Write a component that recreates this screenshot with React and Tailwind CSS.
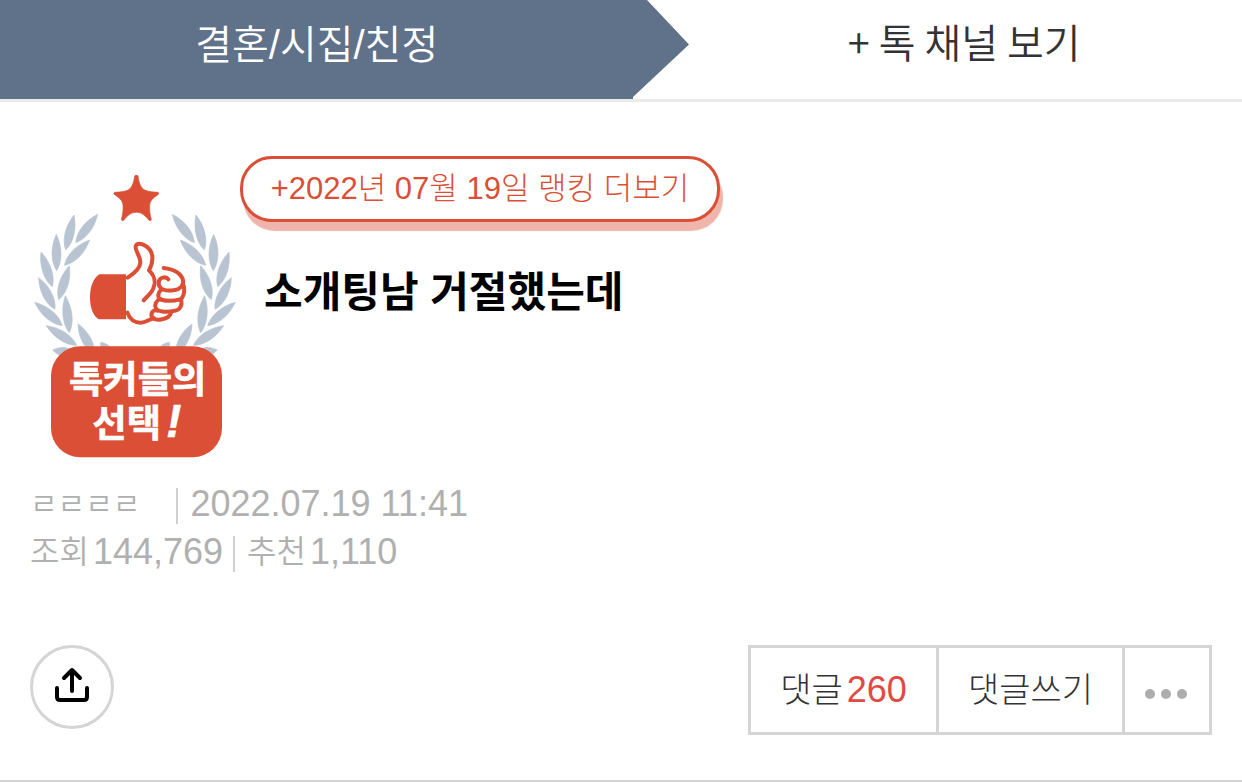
import React from "react";

const LEAVES = [
  [227, 278, 293, 193],
  [197, 300, 222, 195],
  [193, 346, 269, 270],
  [170, 362, 169, 253],
  [157, 410, 123, 306],
  [176, 449, 208, 347],
  [165, 478, 116, 383],
  [187, 527, 104, 457],
  [208, 548, 196, 437],
  [230, 586, 139, 527],
  [282, 612, 234, 522],
  [225, 612, 158, 600],
  [335, 620, 302, 577],
];

function leafPath([bx, by, tx, ty]) {
  const dx = tx - bx;
  const dy = ty - by;
  const len = Math.hypot(dx, dy);
  const nx = (-dy / len) * 18;
  const ny = (dx / len) * 18;
  const at = (t, side) => `${bx + dx * t + nx * side} ${by + dy * t + ny * side}`;
  return `M${bx} ${by} C${at(0.25, 1)} ${at(0.65, 1)} ${tx} ${ty} C${at(0.65, -1)} ${at(0.25, -1)} ${bx} ${by}Z`;
}

function Laurel() {
  return LEAVES.map((leaf) => <path key={leaf.join()} d={leafPath(leaf)} />);
}

function Emblem() {
  return (
    <svg viewBox="90 75 630 855" className="mt-[19px] w-[210px] shrink-0" role="img" aria-label="톡커들의 선택!">
      <g fill="#b8c4d1" stroke="#b8c4d1" strokeWidth="2" strokeLinejoin="round">
        <Laurel />
        <g transform="translate(810 0) scale(-1 1)">
          <Laurel />
        </g>
      </g>
      <path
        fill="#da4f35"
        stroke="#da4f35"
        strokeWidth="2"
        d="M404 78Q409 72 414 78C417 100 423 116 436 121C448 126 460 126 474 127Q479 130 474 134C460 143 450 152 449 165C448 181 450 195 454 208Q453 214 447 211C436 197 425 187 409 187C393 187 382 197 371 211Q365 214 364 208C368 195 370 181 369 165C368 152 358 143 344 134Q339 130 344 127C358 126 370 126 382 121C395 116 401 100 404 78Z"
      />
      <g transform="translate(240 240)">
        <path fill="#da4f35" d="M138 133H58C40 146 30 168 30 202C30 235 40 258 56 268H138Z" />
        <g fill="none" stroke="#da4f35" strokeWidth="12" strokeLinecap="round" strokeLinejoin="round">
          <path d="M143 143C157 134 180 118 181 98C182 78 164 62 167 49C170 38 184 40 196 47C222 62 222 92 207 121C222 135 228 155 221 172C216 190 202 198 191 211" />
          <path d="M142 248C150 270 165 278 182 278C198 278 206 268 222 265" />
          <path d="M251 114C275 117 302 126 309 150C312 166 300 178 285 180C262 184 236 182 236 158C237 141 258 138 265 148" />
          <path d="M309 162C317 180 311 204 300 208C280 214 250 214 240 207C232 200 234 188 243 180" />
          <path d="M303 208C308 225 300 240 285 242C262 248 235 246 228 236C222 225 228 212 240 207" />
          <path d="M274 245C271 262 258 267 240 269C222 271 212 262 215 250C217 243 224 239 232 242" />
        </g>
      </g>
      <rect x="153" y="589" width="513" height="333" rx="88" fill="#da4f35" />
      <g fill="#fff" stroke="#fff" strokeWidth="2" fontFamily="'Liberation Sans', 'Noto Sans CJK KR', sans-serif" fontWeight="700">
        <text x="207" y="730" fontSize="112">톡커들의</text>
        <text x="277" y="862" fontSize="112">
          선택<tspan dx="16" fontStyle="italic" fontSize="136">!</tspan>
        </text>
      </g>
    </svg>
  );
}

function ShareIcon() {
  return (
    <svg viewBox="0 2 36 36" className="size-9 overflow-visible" fill="none" stroke="#000" strokeWidth="4" strokeLinecap="round" strokeLinejoin="round" aria-hidden="true">
      <path d="M18 24V3M10 11L18 3L26 11M3 21V30Q3 33 6 33H30Q33 33 33 30V21" />
    </svg>
  );
}

export default function App() {
  return (
    <div className="border-b-2 border-[#d5d5d5] bg-white font-['Liberation_Sans','Noto_Sans_CJK_KR',sans-serif] text-[#333]">
      <nav className="flex h-[102px] border-b-[3px] border-[#ebebeb]">
        <a href="#category" className="flex w-[51%] justify-center bg-[#60718a] pt-[17px] text-[40px] leading-[56px] font-[350] text-white">
          결혼/시집/친정
        </a>
        <svg viewBox="0 0 57 99" className="h-[99px] w-[57px] shrink-0" aria-hidden="true">
          <path d="M-1 0H14L56 44.500L0 97V99H-1Z" fill="#60718a" />
        </svg>
        <a href="#channels" className="flex flex-1 justify-center pt-[13px] pr-1 font-['Noto_Sans_CJK_KR',sans-serif] text-[40px] leading-[56px] font-[350]">
          + 톡 채널 보기
        </a>
      </nav>

      <main className="px-[30px] pt-[54px] pb-[45px]">
        <header className="flex items-start">
          <Emblem />
          <div className="flex flex-col items-start">
            <a
              href="#ranking"
              className="flex h-[66px] w-[480px] items-center justify-center rounded-[32px] border-[3px] border-[#da4f35] bg-white text-[31px] leading-[48px] font-light whitespace-nowrap text-[#da4f35] shadow-[3px_9px_1px_#efb4ab]"
            >
              +2022년 07월 19일 랭킹 더보기
            </a>
            <h1 className="mt-[41px] pl-6 text-[42px] leading-[60px] font-bold text-black">소개팅남 거절했는데</h1>
          </div>
        </header>

        <div className="mt-5 text-[36px] leading-[48px] font-light text-[#b0b0b0]">
          <p className="flex items-center">
            <span className="text-[30px] font-[350]">ㄹㄹㄹㄹ</span>
            <span className="mt-1 mr-3 ml-9 h-9 w-[2px] bg-[#d0d0d0]" />
            <time dateTime="2022-07-19T11:41">2022.07.19 11:41</time>
          </p>
          <p className="flex items-center">
            <span className="mr-1 text-[32px] font-[350]">조회</span>
            <span>144,769</span>
            <span className="mt-1 mr-3 ml-[10px] h-9 w-[2px] bg-[#d0d0d0]" />
            <span className="mr-1 text-[32px] font-[350]">추천</span>
            <span>1,110</span>
          </p>
        </div>

        <div className="mt-[69px] flex items-start justify-between">
          <button type="button" aria-label="공유" className="flex size-[84px] items-center justify-center rounded-full border-[3px] border-[#d5d5d5]">
            <ShareIcon />
          </button>
          <div className="flex h-[90px] divide-x-[3px] divide-[#d5d5d5] border-[3px] border-[#d5d5d5] text-[34px] leading-[48px] font-light">
            <button type="button" className="flex w-[188px] items-center justify-center gap-1">
              댓글 <span className="text-[36px] text-[#df4a42]">260</span>
            </button>
            <button type="button" className="flex w-[186px] items-center justify-center">
              댓글쓰기
            </button>
            <button type="button" aria-label="더보기" className="flex w-[84px] items-center justify-center">
              <svg viewBox="0 0 44 20" className="h-5 w-11" fill="#adadad" aria-hidden="true">
                <circle cx="5" cy="14" r="5" />
                <circle cx="21" cy="14" r="5" />
                <circle cx="37" cy="14" r="5" />
              </svg>
            </button>
          </div>
        </div>
      </main>
    </div>
  );
}
